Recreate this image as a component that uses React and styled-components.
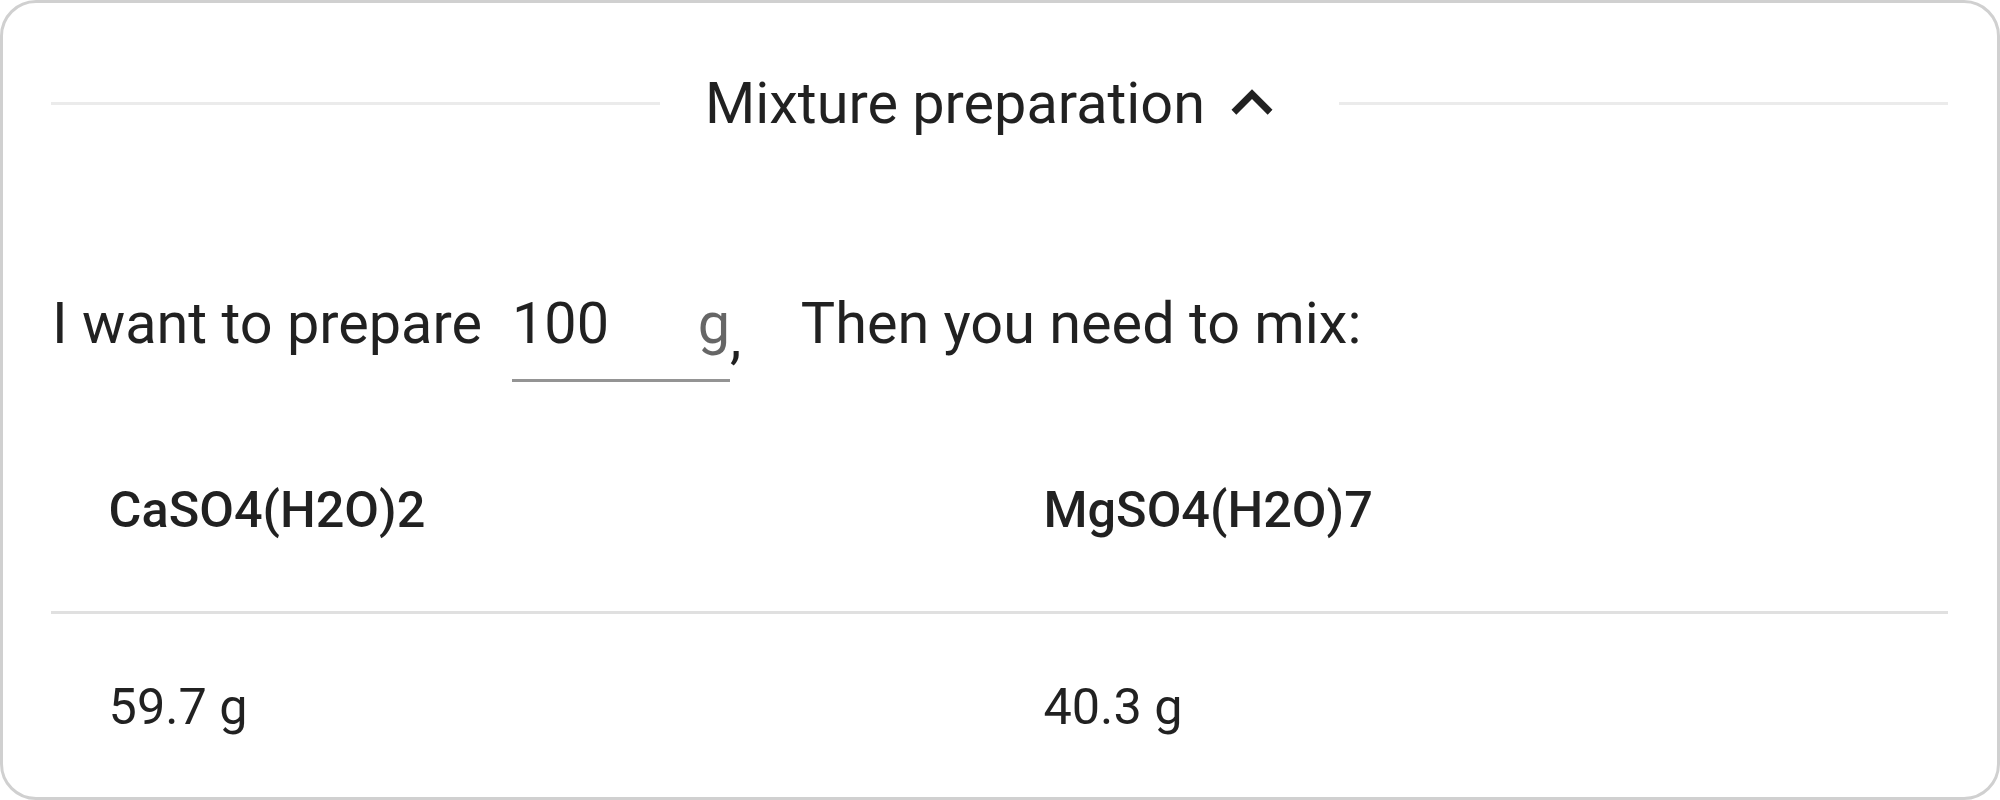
import React from "react";
import styled, { createGlobalStyle } from "styled-components";

const GlobalStyle = createGlobalStyle`
  html, body {
    margin: 0;
    padding: 0;
    background: #ffffff;
  }
  body {
    font-family: Roboto, "Liberation Sans", Arial, sans-serif;
    color: rgba(0, 0, 0, 0.87);
  }
`;

const Card = styled.section`
  box-sizing: border-box;
  width: 2000px;
  height: 800px;
  border: 3px solid #d0d0d0;
  border-radius: 36px;
  padding: 0 49px 0 48px;
  overflow: hidden;
  background: #ffffff;
`;

const TitleRow = styled.div`
  display: flex;
  align-items: center;
  height: 82px;
  margin-top: 59px;
`;

const Rule = styled.div`
  flex: 1;
  height: 3px;
  background: #ebebeb;
`;

const TitleGroup = styled.div`
  display: flex;
  align-items: center;
  padding: 0 46px 0 45px;
  cursor: pointer;
`;

const TitleText = styled.span`
  font-size: 57.6px;
  line-height: normal;
  font-weight: 400;
  color: rgba(0, 0, 0, 0.87);
`;

const ChevronIcon = styled.svg`
  width: 82px;
  height: 82px;
  margin-left: 6px;
  fill: rgba(0, 0, 0, 0.87);
  flex-shrink: 0;
`;

const SentenceRow = styled.div`
  display: flex;
  align-items: baseline;
  margin-top: 124px;
  margin-left: 1px;
  font-size: 57.6px;
`;

const Phrase = styled.span`
  line-height: 86.4px;
  white-space: pre;
  margin-left: ${(p) => p.$offset || 0}px;
`;

const InputRoot = styled.label`
  box-sizing: border-box;
  display: flex;
  align-items: baseline;
  width: 218px;
  margin-left: 30px;
  padding: 14px 0 13px;
  border-bottom: 3px solid rgba(0, 0, 0, 0.42);
`;

const AmountInput = styled.input`
  flex: 1;
  min-width: 0;
  height: 82.8px;
  padding: 0;
  margin: 0;
  border: none;
  outline: none;
  background: transparent;
  font: inherit;
  color: rgba(0, 0, 0, 0.87);
`;

const Adornment = styled.span`
  margin-left: 28.8px;
  line-height: 82.8px;
  color: rgba(0, 0, 0, 0.6);
`;

const Comma = styled.span`
  align-self: flex-end;
  line-height: 86.4px;
`;

const Table = styled.table`
  width: 100%;
  margin-top: 28px;
  border-collapse: collapse;
  font-size: 50.4px;
`;

const HeadCell = styled.th`
  padding: 57.6px;
  line-height: 86.4px;
  font-weight: 500;
  text-align: left;
  color: rgba(0, 0, 0, 0.87);
  border-bottom: 3px solid #e0e0e0;
`;

const BodyCell = styled.td`
  padding: 50px 57.6px 0;
  line-height: 86.4px;
  font-weight: 400;
  text-align: left;
  color: rgba(0, 0, 0, 0.87);
`;

const mixture = [
  { name: "CaSO4(H2O)2", amount: "59.7 g" },
  { name: "MgSO4(H2O)7", amount: "40.3 g" },
];

export default function App() {
  return (
    <>
      <GlobalStyle />
      <Card>
        <TitleRow>
          <Rule />
          <TitleGroup>
            <TitleText>Mixture preparation</TitleText>
            <ChevronIcon viewBox="0 0 24 24" aria-hidden="true">
              <path d="M12 8l-6 6 1.41 1.41L12 10.83l4.59 4.58L18 14z" />
            </ChevronIcon>
          </TitleGroup>
          <Rule />
        </TitleRow>

        <SentenceRow>
          <Phrase>I want to prepare</Phrase>
          <InputRoot>
            <AmountInput defaultValue="100" />
            <Adornment>g</Adornment>
          </InputRoot>
          <Comma>,</Comma>
          <Phrase $offset={59.5}>Then you need to mix:</Phrase>
        </SentenceRow>

        <Table>
          <thead>
            <tr>
              {mixture.map((m) => (
                <HeadCell key={m.name}>{m.name}</HeadCell>
              ))}
            </tr>
          </thead>
          <tbody>
            <tr>
              {mixture.map((m) => (
                <BodyCell key={m.name}>{m.amount}</BodyCell>
              ))}
            </tr>
          </tbody>
        </Table>
      </Card>
    </>
  );
}
